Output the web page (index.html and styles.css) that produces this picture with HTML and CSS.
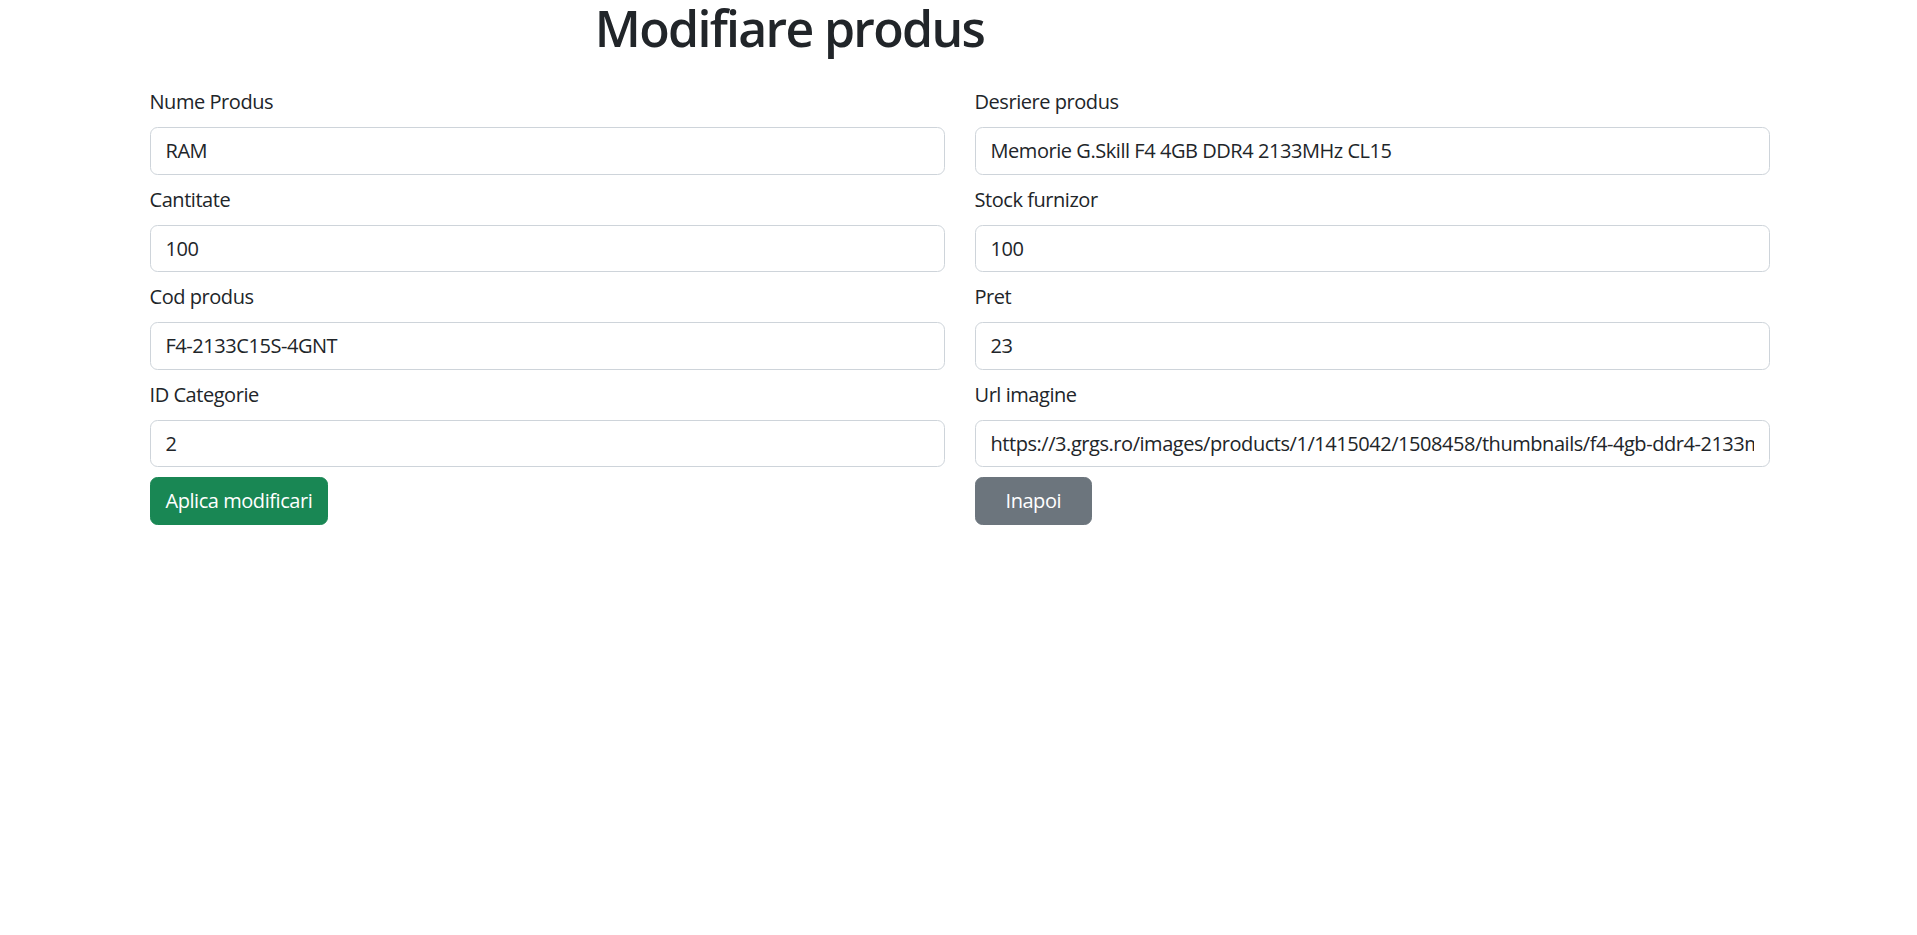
FILE: index.html
```html
<!DOCTYPE html>
<html lang="ro">
<head>
<meta charset="utf-8">
<title>Modifiare produs</title>
<link rel="stylesheet" href="styles.css">
</head>
<body>
<div class="container">
  <h1 class="title">Modifiare produs</h1>
  <form class="form">
    <div class="col">
      <div class="group">
        <label class="label">Nume Produs</label>
        <input class="control" type="text" value="RAM">
      </div>
      <div class="group">
        <label class="label">Cantitate</label>
        <input class="control" type="text" value="100">
      </div>
      <div class="group">
        <label class="label">Cod produs</label>
        <input class="control" type="text" value="F4-2133C15S-4GNT">
      </div>
      <div class="group">
        <label class="label">ID Categorie</label>
        <input class="control" type="text" value="2">
      </div>
      <div><button type="button" class="btn btn-success">Aplica modificari</button></div>
    </div>
    <div class="col">
      <div class="group">
        <label class="label">Desriere produs</label>
        <input class="control" type="text" value="Memorie G.Skill F4 4GB DDR4 2133MHz CL15">
      </div>
      <div class="group">
        <label class="label">Stock furnizor</label>
        <input class="control" type="text" value="100">
      </div>
      <div class="group">
        <label class="label">Pret</label>
        <input class="control" type="text" value="23">
      </div>
      <div class="group">
        <label class="label">Url imagine</label>
        <input class="control" type="text" value="https://3.grgs.ro/images/products/1/1415042/1508458/thumbnails/f4-4gb-ddr4-2133mhz-cl15.jpg">
      </div>
      <div><button type="button" class="btn btn-secondary">Inapoi</button></div>
    </div>
  </form>
</div>
</body>
</html>
```
FILE: styles.css
```css
* { box-sizing: border-box; }
html, body { margin: 0; padding: 0; background: #fff; }
body {
  font-family: "Open Sans", "Noto Sans", sans-serif;
  font-size: 20px;
  line-height: 1.5;
  letter-spacing: -0.45px;
  color: #212529;
}
.container {
  width: 1650px;
  margin: 0 auto;
  padding: 0 14px 0 16px;
}
.title {
  margin: 0 0 26px 0;
  padding-top: 0;
  font-size: 50px;
  font-weight: 600;
  line-height: 56px;
  letter-spacing: -1.7px;
  text-align: center;
  width: 1280px;
}
.form {
  display: grid;
  grid-template-columns: 1fr 1fr;
  column-gap: 30px;
  padding-top: 5px;
}
.group { margin-bottom: 10px; }
.label {
  display: block;
  margin-bottom: 10px;
  line-height: 30px;
}
.control {
  display: block;
  width: 100%;
  height: 47.5px;
  padding: 7.5px 15px;
  font: inherit;
  letter-spacing: inherit;
  color: #212529;
  background: #fff;
  border: 1px solid #ced4da;
  border-radius: 7.5px;
  outline: none;
}
.btn {
  display: inline-block;
  height: 47.5px;
  padding: 7.5px 15px;
  font: inherit;
  letter-spacing: inherit;
  color: #fff;
  border: 1px solid transparent;
  border-radius: 7.5px;
  cursor: pointer;
}
.btn-success { background: #198754; border-color: #198754; }
.btn-secondary { background: #6c757d; border-color: #6c757d; padding: 7.5px 30px; }
```
